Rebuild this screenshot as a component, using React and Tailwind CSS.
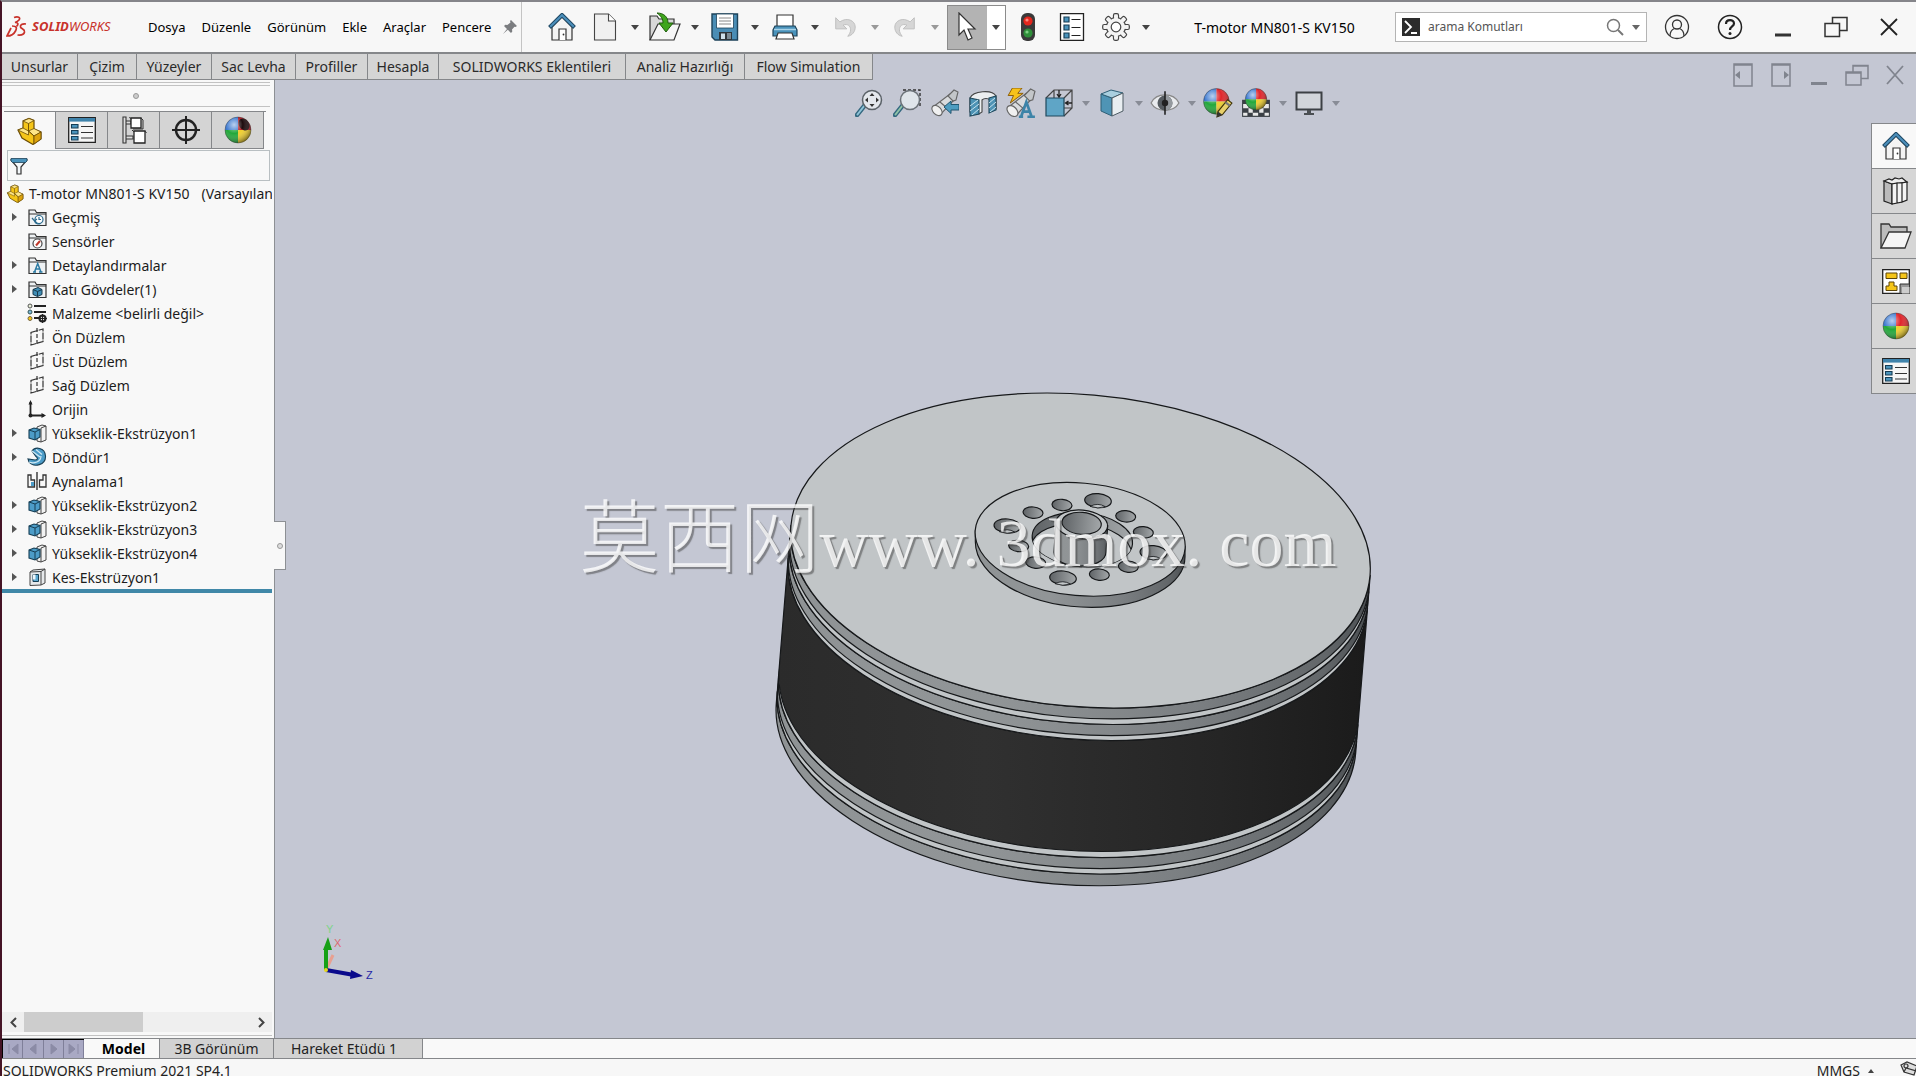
import React, { useState } from 'react';

const MENUS = ['Dosya', 'Düzenle', 'Görünüm', 'Ekle', 'Araçlar', 'Pencere'];

const COMMAND_TABS = [
  { label: 'Unsurlar', width: 'w-[76px]' },
  { label: 'Çizim', width: 'w-[59px]' },
  { label: 'Yüzeyler', width: 'w-[75px]' },
  { label: 'Sac Levha', width: 'w-[84px]' },
  { label: 'Profiller', width: 'w-[72px]' },
  { label: 'Hesapla', width: 'w-[71px]' },
  { label: 'SOLIDWORKS Eklentileri', width: 'w-[187px]' },
  { label: 'Analiz Hazırlığı', width: 'w-[119px]' },
  { label: 'Flow Simulation', width: 'w-[128px]' },
];

/* ---------- ICONS ---------- */

const Svg = ({ size = 28, box = 28, children }) => (
  <svg width={size} height={size} viewBox={`0 0 ${box} ${box}`} fill="none" className="block shrink-0" aria-hidden="true">
    {children}
  </svg>
);

const Caret = ({ color = '#444' }) => (
  <svg width="8" height="5" viewBox="0 0 8 5" className="block" aria-hidden="true">
    <path d="M0 0h8L4 5z" fill={color} />
  </svg>
);

const HomeIcon = () => (
  <Svg>
    <path d="M4 14v13h20V14L14 4z" fill="#f4f4f4" stroke="#333" strokeWidth="1.2" />
    <path d="M11 27V16h7v11" fill="#fff" stroke="#333" strokeWidth="1.2" />
    <circle cx="15.5" cy="21.5" r="0.9" fill="#333" />
    <path d="M1.5 14.5 14 2l12.5 12.5" stroke="#1f4864" strokeWidth="4" />
    <path d="M2.2 13.8 14 2.2l11.8 11.6" stroke="#4c8fbb" strokeWidth="2" />
  </Svg>
);

const NewIcon = () => (
  <Svg>
    <path d="M3.5 1h14l7 7v19h-21z" fill="#f0f0f0" stroke="#444" strokeWidth="1.1" />
    <path d="M17.500 1v7h7" fill="#fff" stroke="#444" strokeWidth="1.1" />
  </Svg>
);

const OpenIcon = () => (
  <Svg size={32} box={32}>
    <path d="M1 29V5h7l2 3h15v5" fill="#d8d8d8" stroke="#333" strokeWidth="1.200" />
    <path d="M1 29 9 13h22l-6 16z" fill="#f6f6f6" stroke="#333" strokeWidth="1.200" />
    <path d="M8 2c7 0 11 4 11 10h5l-7 9-7-9h4c0-4-2-7-6-10z" fill="#3fa51d" stroke="#1f5c0d" strokeWidth="1" />
  </Svg>
);

const SaveIcon = () => (
  <Svg>
    <path d="M1 1h25.500v26H4l-3-3z" fill="#4a8db5" stroke="#1d4259" strokeWidth="1.400" />
    <path d="M5.500 1h17v14h-17z" fill="#fff" stroke="#1d4259" strokeWidth="0.800" />
    <path d="M8 5h12M8 8h12M8 11h12" stroke="#888" />
    <path d="M8 19h13v8H8z" fill="#30373c" />
    <path d="M10 20.500h4v5.500h-4z" fill="#cfe0ea" />
    <path d="M16 20h4v6h-4z" fill="#7b8a94" />
  </Svg>
);

const PrintIcon = () => (
  <Svg>
    <path d="M6 2h16v13H6z" fill="#fff" stroke="#333" strokeWidth="1.200" />
    <path d="M4 13h20l2 4v6H2v-6z" fill="#4a93bb" stroke="#1d4259" strokeWidth="1.200" />
    <path d="M3 16.500h22" stroke="#a9d3e8" strokeWidth="1.500" />
    <path d="M7 20h14l2 6H5z" fill="#fff" stroke="#333" strokeWidth="1.200" />
  </Svg>
);

const UndoIcon = () => (
  <Svg size={26}>
    <path d="M4 4v12h12l-4-4c5-2 8 1 8 5 0 3-1.500 5-3 7 5-1 8-5 8-10 0-7-9-11-16.500-5.500z" fill="#d6d6d6" stroke="#bdbdbd" />
  </Svg>
);

const RedoIcon = () => (
  <Svg size={26}>
    <path d="M24 4v12H12l4-4c-5-2-8 1-8 5 0 3 1.500 5 3 7-5-1-8-5-8-10 0-7 9-11 16.500-5.500z" fill="#d6d6d6" stroke="#bdbdbd" />
  </Svg>
);

const CursorIcon = () => (
  <Svg size={30} box={30}>
    <path d="M6 1v22l5-5 4 10 4-2-4-9h7z" fill="#fff" stroke="#333" strokeWidth="1.200" />
  </Svg>
);

const TrafficIcon = () => (
  <Svg>
    <rect x="7" y="0" width="14" height="28" rx="6" fill="#3a3a3a" />
    <circle cx="14" cy="8" r="4.600" fill="#e3261d" />
    <circle cx="13" cy="7" r="1.600" fill="#ff8b80" />
    <circle cx="14" cy="20" r="4.600" fill="#2f8f3a" />
    <circle cx="13" cy="19" r="1.600" fill="#7fcf84" />
  </Svg>
);

const ListIcon = () => (
  <Svg>
    <path d="M2.500 .7h23v26.600h-23z" fill="#fff" stroke="#222" strokeWidth="1.300" />
    <path d="M6 4h5v5H6zM6 12h5v5H6zM6 20h5v5H6z" fill="#4a93bb" stroke="#163d55" strokeWidth="1.200" />
    <path d="M13.500 6.500h9M13.500 14.500h9M13.500 22.500h9" stroke="#222" strokeWidth="1.200" />
  </Svg>
);

const GearIcon = () => (
  <Svg>
    {[0, 45, 90, 135].map(a => (
      <rect key={a} x="11.500" y="0.700" width="5" height="26.600" rx="1.500" fill="#f4f4f4" stroke="#444" strokeWidth="1.200" transform={`rotate(${a} 14 14)`} />
    ))}
    <circle cx="14" cy="14" r="9.500" fill="#f4f4f4" stroke="#444" strokeWidth="1.200" />
    {[0, 45, 90, 135].map(a => (
      <rect key={a} x="12.100" y="3" width="3.800" height="22" fill="#f4f4f4" transform={`rotate(${a} 14 14)`} />
    ))}
    <circle cx="14" cy="14" r="4.800" fill="#fff" stroke="#444" strokeWidth="1.200" />
  </Svg>
);

const PartIcon = ({ size = 28 }) => (
  <Svg size={size}>
    <path d="M2 13l5-2V4l6-2.500 5 2V12l7 3v7l-8 5.500L6 21z" fill="#f5c518" stroke="#6b4c05" strokeWidth="1.200" />
    <path d="M7 4l5.500 2.500L18 3.500 13 1.500zM2 13l5-2 5.500 3v4zM12.500 14l5.500-2.500 7 3.500-7 4z" fill="#fde588" stroke="#6b4c05" strokeWidth="0.800" />
    <path d="M12.500 6.500V14l5.500 5v8" stroke="#6b4c05" strokeWidth="0.900" />
    <path d="M18 19l7-4v7l-7 5z" fill="#dca20d" stroke="#6b4c05" strokeWidth="0.800" />
  </Svg>
);

const PropertyIcon = () => (
  <Svg>
    <path d="M.7 1.700h26.600v24.600H.7z" fill="#f6f6f6" stroke="#222" strokeWidth="1.300" />
    <path d="M1 2h26v3.600H1z" fill="#3f83ab" />
    <path d="M3.500 8.500h6.500v3.500H3.500zM3.500 14.500h6.500v3.500H3.500zM3.500 20.500h6.500v3.500H3.500z" fill="#4a93bb" stroke="#163d55" strokeWidth="1.100" />
    <path d="M13 10.500h12M13 16.500h12M13 22h12" stroke="#333" strokeWidth="1.200" />
  </Svg>
);

const ConfigIcon = () => (
  <Svg>
    <path d="M3 1h3v26H3zM6 5h5v3H6zM6 20h7v3H6z" fill="#ddd" stroke="#333" strokeWidth="1.100" />
    <path d="M11 2h10v10H11zM14 15h11v12H14z" fill="#fff" stroke="#222" strokeWidth="1.300" />
    <path d="M11 3.500 9.500 1M21 2l2 2v9H13M14 16l-2-2M25 15l1.500 2" stroke="#333" />
  </Svg>
);

const TargetIcon = () => (
  <Svg>
    <circle cx="14" cy="14" r="10" stroke="#222" strokeWidth="2.400" />
    <path d="M14 0v28M0 14h28" stroke="#222" strokeWidth="2" />
  </Svg>
);

const BallShape = ({ id, cx = 14, cy = 14, r = 13, notch }) => (
  <>
    <defs>
      <radialGradient id={id} cx="0.35" cy="0.3" r="0.75">
        <stop offset="0" stopColor="#fff" stopOpacity="0.65" />
        <stop offset="0.45" stopColor="#fff" stopOpacity="0" />
        <stop offset="1" stopColor="#000" stopOpacity="0.5" />
      </radialGradient>
    </defs>
    <path d={`M${cx} ${cy}V${cy - r}A${r} ${r} 0 0 0 ${cx - r} ${cy}z`} fill="#3a78d0" />
    <path d={`M${cx} ${cy}V${cy - r}A${r} ${r} 0 0 1 ${cx + r} ${cy}z`} fill={notch ? '#b3202a' : '#e0252b'} />
    <path d={`M${cx} ${cy}H${cx - r}A${r} ${r} 0 0 0 ${cx} ${cy + r}z`} fill="#22a83a" />
    <path d={`M${cx} ${cy}H${cx + r}A${r} ${r} 0 0 1 ${cx} ${cy + r}z`} fill="#f0cf2c" />
    {notch && <ellipse cx="20" cy="8.500" rx="5" ry="6.500" fill="#1d0b0d" transform="rotate(-35 20 8.500)" />}
    <circle cx={cx} cy={cy} r={r} fill={`url(#${id})`} stroke="#333" strokeOpacity="0.500" strokeWidth="0.800" />
  </>
);

const FilterIcon = () => (
  <Svg size={18} box={18}>
    <path d="M1 3h16l-6 7v7H7v-7z" fill="#f4f8fa" stroke="#333" strokeWidth="1.200" />
    <path d="M1 1.500h16V4l-1.500 1.500h-13L1 4z" fill="#4a93bb" stroke="#1d4259" strokeWidth="0.800" />
  </Svg>
);

const BooksIcon = () => (
  <Svg>
    <path d="M2 4v20l8 3V7z" fill="#bbb" stroke="#222" strokeWidth="1.200" />
    <path d="M2 4 7 2l3 1 3-2 4 1 3-1 5 4L10 7z" fill="#eee" stroke="#222" strokeWidth="1.200" />
    <path d="M10 7v20l5-1V6zM15 6v20l5-1V6zM20 6v19l5-2V5z" fill="#f4f4f4" stroke="#222" strokeWidth="1.200" />
  </Svg>
);

const FolderIcon = () => (
  <Svg size={32} box={32}>
    <path d="M1 28V4h8l2 3h16v6" fill="#bcbcbc" stroke="#333" strokeWidth="1.300" />
    <path d="M1 28 9 12h22l-6 16z" fill="#f4f4f4" stroke="#333" strokeWidth="1.300" />
  </Svg>
);

const PaletteIcon = () => (
  <Svg>
    <path d="M.7 2.700h26.600v23.600H.7z" fill="#fff" stroke="#222" strokeWidth="1.300" />
    <path d="M4 6h11v5.500H4zM18 6h7v5.500h-7zM7 15h5v4h3v4.500H4V19h3z" fill="#f5c518" stroke="#5c4508" />
    <path d="M18 17h9.500v9.500H18z" fill="#999" stroke="#333" />
    <path d="M20 20h7.500v6.500H20z" fill="#ccc" />
  </Svg>
);

/* HUD icons */
const ZoomFit = () => (
  <Svg>
    <path d="M2 26l8-10" stroke="#33687f" strokeWidth="4.500" strokeLinecap="round" />
    <path d="M2.500 25.500l7-9" stroke="#8fc3d8" strokeWidth="2" strokeLinecap="round" />
    <circle cx="17" cy="11" r="9.500" fill="#e3e7ec" stroke="#5b6268" strokeWidth="1.500" />
    <path d="M17 4l2.500 3h-5zM17 18l2.500-3h-5zM10 11l3-2.500v5zM24 11l-3-2.500v5z" fill="#333" />
  </Svg>
);
const ZoomArea = () => (
  <Svg>
    <path d="M10 1h17v17" stroke="#333" strokeWidth="1.400" strokeDasharray="3 2" />
    <path d="M2 26l8-10" stroke="#33687f" strokeWidth="4.500" strokeLinecap="round" />
    <path d="M2.500 25.500l7-9" stroke="#8fc3a8" strokeWidth="2" strokeLinecap="round" />
    <circle cx="17" cy="11" r="9.500" fill="#dfe5ea" stroke="#6b7278" strokeWidth="1.500" />
  </Svg>
);
const Scope = () => (
  <g stroke="#666" strokeWidth="1.100">
    <path d="M2 18 19 5l5 5L9 26z" fill="#d9dbdd" />
    <path d="M17 7l6-6 4 2-2 8-3 1z" fill="#c3c6c9" />
    <ellipse cx="6" cy="21.500" rx="4" ry="6" fill="#f0f0f0" transform="rotate(-45 6 21.500)" />
    <path d="M9 13l7 6" />
  </g>
);
const PreviousView = () => (
  <Svg>
    <Scope />
    <path d="M13 18l7-6v3.500h8v5.500h-8v3.500z" fill="#4d9cc0" stroke="#215670" />
  </Svg>
);
const SectionView = () => (
  <Svg>
    <path d="M1 9C4 2 23 0 27 7v13l-6 3V11c-2-2-6-2-8 0v12l-3 2-9-2z" fill="#eceef0" stroke="#444" strokeWidth="1.100" />
    <path d="M1 9l9 2v14l-9 2zM20 9l7-2v14l-7 3z" fill="#4d93b5" stroke="#1f485c" strokeWidth="1.100" />
    <path d="M1 17l8-6M1 22l9-7M3 26l7-6M20 14l6-5M20 19l7-6M21 23l6-5" stroke="#d6ebf4" strokeWidth="0.900" />
  </Svg>
);
const DynamicAnnotation = () => (
  <Svg size={30}>
    <Scope />
    <path d="M6 0h9l-4 5h5L4 14l3-7H2z" fill="#f7c21a" stroke="#8a5c08" strokeWidth="0.900" />
    <path d="M12 27h4M20 27h7M14 27l5-14 5 14M16 22h6" stroke="#3d84a8" strokeWidth="2.500" />
  </Svg>
);
const OrientationView = () => (
  <Svg>
    <path d="M1 9 9 1h18v18l-8 8M9 1v9M19 9l8-8M27 19h-8" stroke="#444" strokeWidth="1.200" />
    <path d="M1 9h18v18H1z" fill="#5fa5c6" stroke="#1f485c" strokeWidth="1.200" />
    <path d="M14 1v7M12 5l2 3 2-3M27 14h-6M23.500 12l-3 2 3 2" stroke="#222" strokeWidth="1.300" />
  </Svg>
);
const DisplayStyle = () => (
  <Svg>
    <path d="M3 5l11 4v18L3 22z" fill="#4f94b5" stroke="#2f5f76" />
    <path d="M3 5l10-4 12 3-11 5z" fill="#a9cfdf" stroke="#2f5f76" />
    <path d="M14 9l11-5v18l-11 5z" fill="#e9eef1" stroke="#4d5b63" />
  </Svg>
);
const EyeIcon = () => (
  <Svg size={30}>
    <path d="M1 14C6 4 22 4 27 14 22 23 6 23 1 14z" fill="#e9ebee" stroke="#888" strokeWidth="1.200" />
    <circle cx="14" cy="14" r="7" fill="#555b60" />
    <path d="M14 7a7 7 0 0 1 0 14z" fill="#94999e" />
    <circle cx="14" cy="14" r="3" fill="#222" />
    <path d="M14 3v22" stroke="#222" strokeWidth="1.500" />
  </Svg>
);
const AppearanceIcon = () => (
  <Svg size={30}>
    <BallShape id="hudBallA" cx={12.5} cy={12.5} r={12} />
    <path d="M13 27l1-5L23 11l4 3-9 11z" fill="#e8d06a" stroke="#3d3208" />
    <path d="M13 27l1-5 4 3z" fill="#333" />
    <path d="M21 13.500l4 3" stroke="#777" strokeWidth="2" />
  </Svg>
);
const SceneIcon = () => (
  <Svg size={30}>
    <path d="M1 11h26v16H1z" fill="#3b4046" />
    <path d="M2 15h5v4H2zM21 15h5v4h-5zM7 19h4v4H7zM17 19h4v4h-4zM2 23h4v3H2zM11 23h5v3h-5zM22 23h4v3h-4z" fill="#e8e8e8" />
    <BallShape id="hudBallB" cx={14} cy={10.500} r={10} />
  </Svg>
);
const MonitorIcon = () => (
  <Svg>
    <path d="M1.500 3.500h25v17h-25z" fill="#d2d5da" stroke="#3c4044" strokeWidth="2" />
    <path d="M12 21h4v3h-4zM9 24h10v2H9z" fill="#4a4e52" />
  </Svg>
);

/* Feature tree icons */
const TreeFolder = ({ children }) => (
  <Svg size={19} box={19}>
    <path d="M1 17.500V2h6l1.500 2.500H18v13z" fill="#eef1f3" stroke="#333" strokeWidth="1.200" />
    <path d="M1 6h17" stroke="#333" />
    {children}
  </Svg>
);
const HistoryIcon = () => (
  <TreeFolder>
    <circle cx="11" cy="11.500" r="4" fill="#fff" stroke="#2b6a8d" strokeWidth="1.200" />
    <path d="M11 9v2.500h2M4 10l2.500 3L9 11M6.500 13c1 3 4 3.500 6 2.500" stroke="#2b6a8d" strokeWidth="1.200" />
  </TreeFolder>
);
const SensorIcon = () => (
  <TreeFolder>
    <circle cx="9.500" cy="11.500" r="4.500" fill="#fff" stroke="#444" strokeWidth="1.200" />
    <path d="M8 13.500 12 9" stroke="#c0392b" strokeWidth="2" />
  </TreeFolder>
);
const AnnotationIcon = () => (
  <TreeFolder>
    <path d="M5 16h3M11 16h3.500M6.500 16l3.200-8.500 3.300 8.500M8 13h4" stroke="#2b7aa3" strokeWidth="1.500" />
  </TreeFolder>
);
const BodiesIcon = () => (
  <TreeFolder>
    <path d="M5 9.500l5-2 4 2v5l-4.500 2-4.500-2z" fill="#3f8db5" stroke="#16394c" />
    <path d="M5 9.500l4.500 2 4.500-2M9.500 11.500v5" stroke="#16394c" />
  </TreeFolder>
);
const MaterialIcon = () => (
  <Svg size={20} box={20}>
    <path d="M7 3h12M7 9h12M7 15h6" stroke="#222" strokeWidth="1.800" />
    <circle cx="3" cy="3" r="2" fill="#e8eed8" stroke="#555" />
    <circle cx="3" cy="9" r="2" fill="#7db8d8" stroke="#355" />
    <circle cx="3" cy="15.500" r="2" fill="#f5c518" stroke="#764" />
    <circle cx="15.500" cy="15.500" r="3" stroke="#222" strokeWidth="2.200" />
    <path d="M15.500 11v9M11 15.500h9" stroke="#222" strokeWidth="1.200" />
  </Svg>
);
const PlaneIcon = () => (
  <Svg size={18} box={18}>
    <path d="M3 4.500 15 1v12.500L3 17z" stroke="#333" strokeWidth="1.200" strokeDasharray="7 1" />
    <path d="M9 0v18" stroke="#333" strokeWidth="1.200" strokeDasharray="4 2" />
  </Svg>
);
const OriginIcon = () => (
  <Svg size={18} box={18}>
    <path d="M2.500 2v13.500H16" stroke="#222" strokeWidth="1.800" />
    <path d="M.5 4.500 2.500 0l2 4.500zM13.500 13l4.500 2.500-4.500 2.500z" fill="#222" />
    <circle cx="2.500" cy="15.500" r="2" fill="#222" />
  </Svg>
);
const ExtrudeIcon = () => (
  <Svg size={19} box={19}>
    <path d="M9 3l5-2 4 1v14l-5 2-4-1z" fill="#f2f2f2" stroke="#444" />
    <path d="M13 4v14M13 4l5-2" stroke="#444" />
    <path d="M1 6l5-2 6 1.500V13l-5 3-6-2z" fill="#4c9cc8" stroke="#173f55" strokeWidth="1.100" />
    <path d="M1 6l6 2 5-2.500M7 8v8" stroke="#173f55" />
  </Svg>
);
const RevolveIcon = () => (
  <Svg size={20} box={20}>
    <path d="M5 4C8-.5 18 0 18.500 9 19 18 7 21 2 15l-1-3 7 1c3 0 3-2 1-3.500z" fill="#4c9cc8" stroke="#173f55" strokeWidth="1.100" />
    <path d="M5 4l8 6M9 2.500l6 5M2 15c5 2 12 0 12-6" stroke="#cfe8f4" strokeWidth="1.200" />
  </Svg>
);
const MirrorIcon = () => (
  <Svg size={20} box={20}>
    <path d="M1 16V4h3v5h3.500v7zM19 16V4h-3v5h-3.500v7z" stroke="#333" strokeWidth="1.300" />
    <path d="M4 11h3v4H4z" fill="#4c9cc8" />
    <path d="M10 1v18" stroke="#222" strokeWidth="1.300" />
  </Svg>
);
const CutIcon = () => (
  <Svg size={18} box={18}>
    <path d="M2 4l3-2 12-1v14l-4 2-11 .5z" fill="#e6e9eb" stroke="#444" />
    <path d="M2 4l11-.5 4-2.500M13 3.500V17" stroke="#444" />
    <path d="M5 6.500h5.500v7H5z" fill="#5ba7cf" stroke="#173f55" />
    <path d="M5 6.500h2.500v5H5z" fill="#eef6fa" />
  </Svg>
);

const TREE = [
  { label: 'Geçmiş', icon: HistoryIcon, expandable: true },
  { label: 'Sensörler', icon: SensorIcon },
  { label: 'Detaylandırmalar', icon: AnnotationIcon, expandable: true },
  { label: 'Katı Gövdeler(1)', icon: BodiesIcon, expandable: true },
  { label: 'Malzeme <belirli değil>', icon: MaterialIcon },
  { label: 'Ön Düzlem', icon: PlaneIcon },
  { label: 'Üst Düzlem', icon: PlaneIcon },
  { label: 'Sağ Düzlem', icon: PlaneIcon },
  { label: 'Orijin', icon: OriginIcon },
  { label: 'Yükseklik-Ekstrüzyon1', icon: ExtrudeIcon, expandable: true },
  { label: 'Döndür1', icon: RevolveIcon, expandable: true },
  { label: 'Aynalama1', icon: MirrorIcon },
  { label: 'Yükseklik-Ekstrüzyon2', icon: ExtrudeIcon, expandable: true },
  { label: 'Yükseklik-Ekstrüzyon3', icon: ExtrudeIcon, expandable: true },
  { label: 'Yükseklik-Ekstrüzyon4', icon: ExtrudeIcon, expandable: true },
  { label: 'Kes-Ekstrüzyon1', icon: CutIcon, expandable: true },
];

const PANEL_TABS = [
  { label: 'FeatureManager', icon: <PartIcon /> },
  { label: 'PropertyManager', icon: <PropertyIcon /> },
  { label: 'ConfigurationManager', icon: <ConfigIcon /> },
  { label: 'DimXpertManager', icon: <TargetIcon /> },
  { label: 'DisplayManager', icon: <Svg><BallShape id="panelBall" notch /></Svg> },
];

const TASK_TABS = [
  { label: 'Kaynaklar', icon: <HomeIcon /> },
  { label: 'Tasarım Kitaplığı', icon: <BooksIcon /> },
  { label: 'Dosya Gezgini', icon: <FolderIcon /> },
  { label: 'Görünüm Paleti', icon: <PaletteIcon /> },
  { label: 'Görünümler', icon: <Svg><BallShape id="taskBall" /></Svg> },
  { label: 'Özel Özellikler', icon: <PropertyIcon /> },
];

const FILE_TOOLS = [
  { label: 'Yeni', icon: <NewIcon /> },
  { label: 'Aç', icon: <OpenIcon /> },
  { label: 'Kaydet', icon: <SaveIcon /> },
  { label: 'Yazdır', icon: <PrintIcon /> },
  { label: 'Geri Al', icon: <UndoIcon />, muted: true },
  { label: 'Yinele', icon: <RedoIcon />, muted: true },
];

const HUD_TOOLS = [
  { label: 'Sığdır', icon: <ZoomFit /> },
  { label: 'Alanı Yakınlaştır', icon: <ZoomArea /> },
  { label: 'Önceki Görünüm', icon: <PreviousView /> },
  { label: 'Kesit Görünümü', icon: <SectionView /> },
  { label: 'Dinamik Detaylandırma', icon: <DynamicAnnotation /> },
  { label: 'Görünüm Yönü', icon: <OrientationView />, menu: true },
  { label: 'Görüntü Stili', icon: <DisplayStyle />, menu: true },
  { label: 'Gizle/Göster', icon: <EyeIcon />, menu: true },
  { label: 'Görünümü Düzenle', icon: <AppearanceIcon /> },
  { label: 'Sahne Uygula', icon: <SceneIcon />, menu: true },
  { label: 'Görünüm Ayarları', icon: <MonitorIcon />, menu: true },
];

/* ---------- TITLE BAR ---------- */

const ToolButton = ({ label, children }) => (
  <button aria-label={label} className="flex h-9 w-9 shrink-0 items-center justify-center">{children}</button>
);

const CaretButton = ({ label, color }) => (
  <button aria-label={label} className="flex h-9 w-6 shrink-0 items-center justify-center"><Caret color={color} /></button>
);

const WindowButton = ({ label, children }) => (
  <button aria-label={label} className="flex h-9 w-[53px] shrink-0 items-center justify-center">{children}</button>
);

const TitleBar = () => (
  <header className="flex h-[52px] shrink-0 items-center border-b-2 border-[#85878a] bg-[#f7f7f7] pr-px">
    <div className="flex h-full w-[520px] shrink-0 items-center border-r border-[#c4c4c4]">
      <div className="flex w-[146px] shrink-0 items-center gap-1 pl-1 text-[#c8322b]">
        <svg width="22" height="22" viewBox="0 0 22 22" fill="none" stroke="currentColor" strokeWidth="1.700" aria-hidden="true">
          <path d="M8 1.500c4-1.500 7 0 5 2.500-1 1.200-2.500 2-4 2.500 3-.2 4 1.500 1.500 4" />
          <path d="M6 10c5 0 5 2 3.500 5-1.500 3-4 5-8.500 5L5 12" />
          <path d="M20 8c-4-.5-6 1-5.500 3 .5 2 4.500 2 4 5-.5 2.500-3 3.500-7 3" />
        </svg>
        <span className="text-[13px] italic"><b>SOLID</b>WORKS</span>
      </div>
      <nav className="flex gap-4 pt-0.5 text-[13px] text-black">
        {MENUS.map(menu => <button key={menu}>{menu}</button>)}
      </nav>
      <button aria-label="Menüyü sabitle" className="ml-3">
        <svg width="14" height="14" viewBox="0 0 14 14" fill="#7b7d80" aria-hidden="true">
          <path d="M8 0l6 6-1.500 1-1-.3L9 9.500l.3 2L8 13 4.800 9.700 0 14l4-5L1 6l1.300-1.300 2 .3L7.500 2.500 7 1z" />
        </svg>
      </button>
    </div>

    <div className="flex h-full items-center pl-[22px]">
      <ToolButton label="Ana sayfa"><HomeIcon /></ToolButton>
      <div className="ml-[7px] flex">
        {FILE_TOOLS.map(tool => (
          <div key={tool.label} className="flex">
            <ToolButton label={tool.label}>{tool.icon}</ToolButton>
            <CaretButton label={`${tool.label} seçenekleri`} color={tool.muted ? '#999' : '#444'} />
          </div>
        ))}
      </div>
      <div className="flex h-[45px] w-[59px] border border-[#8b8b8b] bg-white">
        <button aria-label="Seç" className="flex flex-1 items-center justify-center bg-[#b3b3b3]"><CursorIcon /></button>
        <button aria-label="Seçim seçenekleri" className="flex w-[18px] items-center justify-center"><Caret /></button>
      </div>
      <div className="ml-1 flex gap-2">
        <ToolButton label="Yeniden oluştur"><TrafficIcon /></ToolButton>
        <ToolButton label="Dosya özellikleri"><ListIcon /></ToolButton>
        <div className="flex">
          <ToolButton label="Seçenekler"><GearIcon /></ToolButton>
          <CaretButton label="Seçenekler menüsü" />
        </div>
      </div>
    </div>

    <h1 className="flex-1 truncate pr-1 text-center text-[14px] text-black">T-motor MN801-S KV150</h1>

    <div className="mr-[3px] flex h-[30px] w-[252px] items-center border border-[#b4b4b4] bg-white px-1.5">
      <svg width="18" height="18" viewBox="0 0 18 18" aria-hidden="true">
        <path d="M0 0h18v18H0z" fill="#2c2c2c" />
        <path d="M3 3l6 6-6 6M9 15h6" stroke="#fff" strokeWidth="1.800" fill="none" />
      </svg>
      <input aria-label="arama Komutları" placeholder="arama Komutları" className="ml-2 min-w-0 flex-1 bg-transparent text-[12px] placeholder-[#555] outline-none" />
      <button aria-label="Ara">
        <svg width="18" height="18" viewBox="0 0 18 18" fill="none" stroke="#777" strokeWidth="1.500" aria-hidden="true">
          <circle cx="7.500" cy="7.500" r="6" />
          <path d="M12 12l5 5" strokeWidth="2" />
        </svg>
      </button>
      <button aria-label="Arama seçenekleri" className="ml-2"><Caret color="#666" /></button>
    </div>

    <WindowButton label="Oturum">
      <Svg size={26} box={26}>
        <circle cx="13" cy="13" r="11.500" stroke="#333" strokeWidth="1.300" />
        <circle cx="13" cy="10.500" r="4.500" stroke="#333" strokeWidth="1.300" />
        <path d="M6 22c0-5 2-6.500 4.500-7.500M20 22c0-5-2-6.500-4.500-7.500" stroke="#333" strokeWidth="1.300" />
      </Svg>
    </WindowButton>
    <WindowButton label="Yardım">
      <Svg size={26} box={26}>
        <circle cx="13" cy="13" r="11.500" stroke="#222" strokeWidth="1.500" />
        <path d="M9 10c0-5 8-5 8-.5 0 3-4 3-4 6.500" stroke="#222" strokeWidth="2.200" />
        <circle cx="13" cy="19.500" r="1.500" fill="#222" />
      </Svg>
    </WindowButton>
    <WindowButton label="Küçült">
      <Svg size={24} box={24}><path d="M4 18.500h16v3H4z" fill="#333" /></Svg>
    </WindowButton>
    <WindowButton label="Geri yükle">
      <Svg size={24} box={24}>
        <path d="M8.500 8V2.500h14.500v13h-7" stroke="#333" strokeWidth="1.500" />
        <path d="M1 8.500h14.500v13H1z" stroke="#333" strokeWidth="1.500" />
      </Svg>
    </WindowButton>
    <WindowButton label="Kapat">
      <Svg size={24} box={24}><path d="M4 4l16 16M20 4 4 20" stroke="#222" strokeWidth="1.800" /></Svg>
    </WindowButton>
  </header>
);

/* ---------- FEATURE PANEL ---------- */

const FeaturePanel = () => {
  const [tab, setTab] = useState('FeatureManager');

  return (
    <aside className="relative flex w-[273px] shrink-0 flex-col border-r border-[#8d9094] bg-[#f8f8f8]">
      <div className="mt-0.5 mr-1 h-1 shrink-0 border-y border-[#c2c2c2]" />
      <div className="mr-1 flex h-[21px] shrink-0 items-center justify-center border-b border-[#c2c2c2]">
        <span className="h-1.5 w-1.5 rounded-full border border-[#999] bg-[#ccc]" />
      </div>

      <div className="mt-1 mr-2 ml-0.5 flex h-[38px] shrink-0 border-t border-[#85878a]" role="tablist">
        {PANEL_TABS.map(item => (
          <button
            key={item.label}
            role="tab"
            aria-label={item.label}
            aria-selected={tab === item.label}
            onClick={() => setTab(item.label)}
            className={`flex w-[52px] items-center justify-center border-r border-[#85878a] ${tab === item.label ? 'bg-[#f8f8f8]' : 'border-b bg-[#d4d4d4]'}`}
          >
            {item.icon}
          </button>
        ))}
      </div>

      <label className="mt-px mr-1 ml-[5px] flex h-[31px] shrink-0 items-center border border-[#b9bfc2] pl-0.5">
        <FilterIcon />
        <input aria-label="Filtre" className="min-w-0 flex-1 bg-transparent text-[14px] outline-none" />
      </label>

      <div className="mr-0.5 overflow-hidden text-[14px] whitespace-nowrap text-[#1c1c1c]">
        <div className="flex h-6 items-center gap-1 pl-1">
          <PartIcon size={19} />
          <span>T-motor MN801-S KV150</span>
          <span className="ml-2">(Varsayılan)</span>
        </div>
        <ul>
          {TREE.map(({ label, icon: Icon, expandable }) => (
            <li key={label} className="flex h-6 items-center">
              <span className="flex w-6 justify-center">
                {expandable && (
                  <svg width="5" height="8" viewBox="0 0 5 8" aria-hidden="true"><path d="M0 0v8l5-4z" fill="#555" /></svg>
                )}
              </span>
              <span className="flex w-[26px] justify-center pr-1"><Icon /></span>
              <span>{label}</span>
            </li>
          ))}
        </ul>
        <div className="h-1 bg-[#4088a8]" />
      </div>

      <div className="mt-auto mr-0.5 mb-[3px] flex h-5 shrink-0 items-center bg-[#efefef]">
        <button aria-label="Sola kaydır" className="flex w-[22px] justify-center">
          <svg width="7" height="11" viewBox="0 0 7 11" fill="none" stroke="#444" strokeWidth="2" aria-hidden="true"><path d="M6 1 1.500 5.500 6 10" /></svg>
        </button>
        <div className="h-full flex-1"><div className="h-full w-[119px] bg-[#cdcdcd]" /></div>
        <button aria-label="Sağa kaydır" className="flex w-[22px] justify-center">
          <svg width="7" height="11" viewBox="0 0 7 11" fill="none" stroke="#444" strokeWidth="2" aria-hidden="true"><path d="M1 1l4.500 4.500L1 10" /></svg>
        </button>
      </div>
      <div className="mr-0.5 h-[3px] shrink-0 border-t border-[#c2c2c2]" />

      {/* Splitter handle on the panel edge */}
      <button aria-label="Paneli daralt" className="absolute top-[441px] -right-3 flex h-[49px] w-3 items-center justify-center border border-l-0 border-[#8d9094] bg-[#f8f8f8]">
        <span className="h-1.5 w-1.5 rounded-full border border-[#999] bg-[#ddd]" />
      </button>
    </aside>
  );
};

/* ---------- 3D MODEL ---------- */

// Each ring of the motor is the same tilted ellipse moved down the axis
const RX = 290.6;
const RY = 156;
const TILT = 5;

const center = depth => [1080.5 - depth * 0.0816, 550.5 + depth];

const Ring = ({ from, to, fill }) => {
  const [x1, y1] = center(from);
  const [x2, y2] = center(to);
  const d = `M${x1 - 289.7} ${y1 - 24.8}L${x2 - 289.7} ${y2 - 24.8}A${RX} ${RY} ${TILT} 0 0 ${x2 + 289.7} ${y2 + 24.8}L${x1 + 289.7} ${y1 + 24.8}A${RX} ${RY} ${TILT} 0 1 ${x1 - 289.7} ${y1 - 24.8}z`;
  return <path d={d} fill={fill} />;
};

const Face = ({ depth }) => {
  const [cx, cy] = center(depth);
  return <ellipse cx={cx} cy={cy} rx={RX} ry={RY} fill="#c1c5c7" transform={`rotate(${TILT} ${cx} ${cy})`} />;
};

const HOLES = [
  [474, 122, 40, 21], [366, 135, 30, 17], [279, 158, 30, 17], [202, 198, 40, 21],
  [236, 258, 30, 17], [287, 308, 30, 17], [369, 354, 40, 21], [478, 344, 30, 17],
  [565, 320, 30, 17], [640, 278, 40, 21], [610, 217, 30, 17], [557, 169, 30, 17],
];

const Motor = () => (
  <svg viewBox="275 80 1641 958" className="absolute inset-0 h-full w-full" role="img" aria-label="T-motor MN801-S KV150">
    <defs>
      <linearGradient id="metal">
        <stop offset="0" stopColor="#8f9395" />
        <stop offset="0.35" stopColor="#919597" />
        <stop offset="0.7" stopColor="#7b7f82" />
        <stop offset="0.92" stopColor="#63676a" />
        <stop offset="1" stopColor="#4b4f52" />
      </linearGradient>
      <linearGradient id="rotor">
        <stop offset="0" stopColor="#2b2b2b" />
        <stop offset="0.35" stopColor="#303030" />
        <stop offset="0.75" stopColor="#252525" />
        <stop offset="1" stopColor="#1b1b1b" />
      </linearGradient>
      <linearGradient id="bore">
        <stop offset="0" stopColor="#5f6366" />
        <stop offset="1" stopColor="#a4a8aa" />
      </linearGradient>
      <clipPath id="pocket"><ellipse cx="427" cy="239" rx="151" ry="81" transform="rotate(5 427 239)" /></clipPath>
    </defs>

    <g stroke="#16181a" strokeWidth="1.200" strokeLinejoin="round">
      <Ring from={166} to={177.7} fill="url(#metal)" />
      <Face depth={166} />
      <Ring from={149.5} to={160.5} fill="url(#metal)" />
      <Face depth={149.5} />
      <Ring from={32.5} to={143.500} fill="url(#rotor)" />
      <Face depth={32.5} />
      <Ring from={16.5} to={27.5} fill="url(#metal)" />
      <Face depth={16.5} />
      <Ring from={0} to={11} fill="url(#metal)" />
      <Face depth={0} />
    </g>

    {/* Hub, drawn at three times its size */}
    <g transform="translate(940 460) scale(0.33333)" stroke="#16181a" strokeWidth="3.500">
      <path d="M106 213v32C106 350 265 442 455 442 620 442 735 370 735 290v-30z" fill="url(#metal)" />
      <ellipse cx="420.500" cy="238" rx="316" ry="169" fill="#c1c5c7" transform="rotate(5 420.500 238)" />
      {HOLES.map(([cx, cy, rx, ry]) => (
        <g key={`${cx}-${cy}`}>
          <ellipse cx={cx} cy={cy} rx={rx} ry={ry} fill="url(#bore)" transform={`rotate(5 ${cx} ${cy})`} />
          {rx === 40 && <path d={`M${cx - 24} ${cy + 17}q24-12 46 1q-22 8-46-1z`} fill="#c1c5c7" strokeWidth="2.500" />}
        </g>
      ))}
      <ellipse cx="427" cy="239" rx="151" ry="81" fill="url(#bore)" transform="rotate(5 427 239)" />
      <g clipPath="url(#pocket)">
        <ellipse cx="424" cy="272" rx="151" ry="81" fill="#c1c5c7" transform="rotate(5 424 272)" />
      </g>
      <path d="M347 192l-5 85c0 55 155 55 156 0l5-80z" fill="url(#metal)" />
      <ellipse cx="425" cy="193" rx="78" ry="43" fill="#c1c5c7" transform="rotate(5 425 193)" />
      <ellipse cx="425" cy="190" rx="59" ry="33" fill="url(#bore)" transform="rotate(5 425 190)" />
    </g>

    {/* Axis triad */}
    <g>
      <path d="M326 970l7-15" stroke="#e8a090" strokeWidth="3" />
      <path d="M326 970V948" stroke="#16a016" strokeWidth="4" />
      <path d="M323 950l5-13 4 13z" fill="#16a016" />
      <path d="M326 970l28 5" stroke="#0a0a8c" strokeWidth="4" />
      <path d="M351 970l12 6-13 3z" fill="#0a0a8c" />
      <circle cx="326" cy="970" r="2" fill="#e6d820" />
      <g className="font-['Liberation_Sans'] text-[11px]">
        <text x="326" y="933" fill="#7fd48a">Y</text>
        <text x="334" y="947" fill="#dd6a70">X</text>
        <text x="366" y="979" fill="#2626a8">Z</text>
      </g>
    </g>
  </svg>
);

/* ---------- VIEWPORT ---------- */

const Viewport = () => (
  <main className="relative min-w-0 flex-1">
    <Motor />

    <div className="relative flex justify-center pt-[5px] pl-0.5">
      {HUD_TOOLS.map(tool => (
        <div key={tool.label} className="flex">
          <button aria-label={tool.label} className="flex h-9 w-[38px] items-center justify-center">{tool.icon}</button>
          {tool.menu && (
            <button aria-label={`${tool.label} menüsü`} className="flex w-[15px] items-center justify-center"><Caret color="#888c96" /></button>
          )}
        </div>
      ))}
    </div>

    <nav aria-label="Görev bölmesi" className="absolute top-[43px] right-0 w-[45px] border-t border-l border-[#85878a]">
      {TASK_TABS.map((item, i) => (
        <button
          key={item.label}
          aria-label={item.label}
          className={`flex h-[45px] w-full items-center justify-center border-b border-[#85878a] pl-1 ${i === 0 ? 'bg-[#f8f8f8]' : 'bg-[#d6d6d6]'}`}
        >
          {item.icon}
        </button>
      ))}
    </nav>
  </main>
);

const DocumentControls = () => (
  <div className="ml-auto flex items-end pr-0.5">
    <button aria-label="Sol bölme" className="flex w-[38px] justify-center">
      <Svg size={24} box={24}><path d="M3 1h18v22H3zM3 2h18" stroke="#80848e" strokeWidth="1.500" /><path d="M9 8v8l-5-4z" fill="#80848e" /></Svg>
    </button>
    <button aria-label="Sağ bölme" className="flex w-[38px] justify-center">
      <Svg size={24} box={24}><path d="M3 1h18v22H3zM3 2h18" stroke="#80848e" strokeWidth="1.500" /><path d="M15 8v8l5-4z" fill="#80848e" /></Svg>
    </button>
    <button aria-label="Belgeyi küçült" className="flex w-[38px] justify-center">
      <Svg size={24} box={24}><path d="M4 19h16v3H4z" fill="#80848e" /></Svg>
    </button>
    <button aria-label="Belgeyi geri yükle" className="flex w-[38px] justify-center">
      <Svg size={24} box={24}>
        <path d="M8 9V2.500h15v13h-7M8 3h15" stroke="#80848e" strokeWidth="1.500" />
        <path d="M1 9h15v13H1zM1 10h15" stroke="#80848e" strokeWidth="1.500" />
      </Svg>
    </button>
    <button aria-label="Belgeyi kapat" className="flex w-[38px] justify-center">
      <Svg size={24} box={24}><path d="M4 3l16 18M20 3 4 21" stroke="#80848e" strokeWidth="1.800" /></Svg>
    </button>
  </div>
);

/* ---------- BOTTOM BARS ---------- */

const NAV_ARROWS = [
  { label: 'İlk', d: 'M2 1v10M11 1v10L5 6z' },
  { label: 'Önceki', d: 'M9 1v10L3 6z' },
  { label: 'Sonraki', d: 'M4 1v10l6-5z' },
  { label: 'Son', d: 'M11 1v10M2 1v10l6-5z' },
];

const BottomTabs = () => (
  <div className="flex h-[21px] shrink-0 border-y border-[#85878a] bg-[#f9f9f9] text-[14px] leading-[19px]">
    <div className="flex w-[82px] shrink-0 border-t border-l border-black bg-[#a9a9c4]">
      {NAV_ARROWS.map(arrow => (
        <button key={arrow.label} aria-label={arrow.label} className="flex flex-1 items-center justify-center border-r border-[#7f7f99]">
          <svg width="12" height="12" viewBox="0 0 12 12" fill="#8b8ba6" stroke="#8b8ba6" aria-hidden="true"><path d={arrow.d} /></svg>
        </button>
      ))}
    </div>
    <button className="w-[76px] shrink-0 border-r border-[#85878a] pl-1 font-bold text-black">Model</button>
    <button className="w-[114px] shrink-0 border-r border-[#85878a] bg-[#d2d2d2] text-[#222]">3B Görünüm</button>
    <button className="w-[149px] shrink-0 border-r border-[#85878a] bg-[#d2d2d2] pr-2 text-[#222]">Hareket Etüdü 1</button>
  </div>
);

const StatusBar = () => (
  <footer className="flex h-[17px] shrink-0 items-start overflow-hidden bg-[#f7f7f7] pt-0.5 text-[14px] leading-5 text-[#222]">
    <span className="pl-px">SOLIDWORKS Premium 2021 SP4.1</span>
    <button className="ml-auto flex items-center gap-2">
      MMGS
      <svg width="6" height="4" viewBox="0 0 6 4" aria-hidden="true"><path d="M0 4h6L3 0z" fill="#444" /></svg>
    </button>
    <button aria-label="Etiketler" className="ml-[26px]">
      <svg width="16" height="16" viewBox="0 0 16 16" fill="#ddd" stroke="#333" strokeWidth="1.200" aria-hidden="true">
        <path d="M1 4l6-3 10 4-3 9-10-3z" />
        <circle cx="6" cy="5" r="2" />
        <path d="M4 11l2-4 10 3" />
      </svg>
    </button>
  </footer>
);

const App = () => (
  <div className="flex h-screen flex-col overflow-hidden border-t-2 border-l-2 border-t-[#85858a] border-l-[#451426] bg-[#c4c7d3] font-['Noto_Sans',sans-serif]">
    <TitleBar />

    <div className="flex h-[26px] shrink-0">
      {COMMAND_TABS.map(tab => (
        <button key={tab.label} className={`${tab.width} shrink-0 border-r border-b border-[#85878a] bg-[#d5d5d5] text-[14px] whitespace-nowrap text-[#2a2a2a]`}>
          {tab.label}
        </button>
      ))}
      <div className="ml-auto pt-[9px]"><DocumentControls /></div>
    </div>

    <div className="flex min-h-0 flex-1">
      <FeaturePanel />
      <Viewport />
    </div>

    <BottomTabs />
    <StatusBar />

    <div className="pointer-events-none fixed inset-0 flex items-center justify-center pb-2">
      <p className="flex items-baseline whitespace-nowrap text-white/80 [text-shadow:2px_2px_1px_rgba(60,60,60,0.5)]">
        <span className="font-['Noto_Sans_CJK_SC',sans-serif] text-[80px] leading-none font-light">莫西网</span>
        <span className="font-['Liberation_Serif',serif] text-[68px] leading-none">www. 3dmox. com</span>
      </p>
    </div>
  </div>
);

export default App;
